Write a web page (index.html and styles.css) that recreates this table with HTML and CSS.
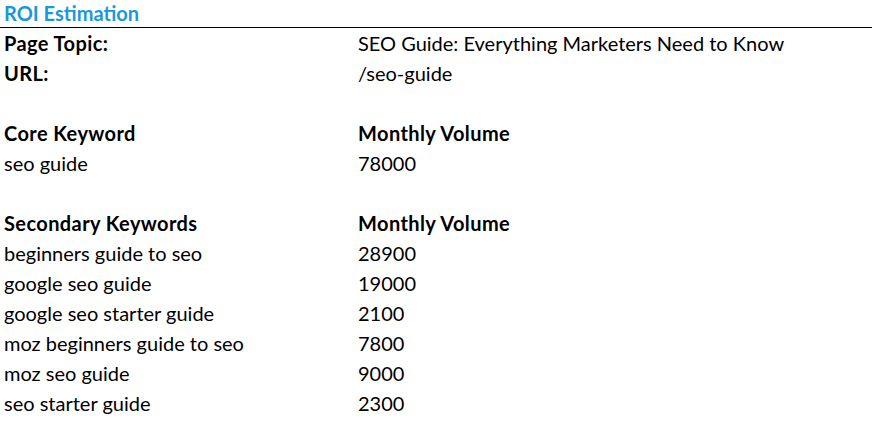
FILE: index.html
```html
<!DOCTYPE html>
<html>
<head>
<meta charset="utf-8">
<link rel="stylesheet" href="styles.css">
</head>
<body>
<div class="sheet">
  <div class="title">ROI Estimation</div>
  <div class="table">
    <div class="cell bold">Page Topic:</div><div class="cell">SEO Guide: Everything Marketers Need to Know</div>
    <div class="cell bold">URL:</div><div class="cell">/seo-guide</div>
    <div class="cell"></div><div class="cell"></div>
    <div class="cell bold">Core Keyword</div><div class="cell bold">Monthly Volume</div>
    <div class="cell">seo guide</div><div class="cell">78000</div>
    <div class="cell"></div><div class="cell"></div>
    <div class="cell bold">Secondary Keywords</div><div class="cell bold">Monthly Volume</div>
    <div class="cell">beginners guide to seo</div><div class="cell">28900</div>
    <div class="cell">google seo guide</div><div class="cell">19000</div>
    <div class="cell">google seo starter guide</div><div class="cell">2100</div>
    <div class="cell">moz beginners guide to seo</div><div class="cell">7800</div>
    <div class="cell">moz seo guide</div><div class="cell">9000</div>
    <div class="cell">seo starter guide</div><div class="cell">2300</div>
  </div>
</div>
</body>
</html>
```
FILE: styles.css
```css
html, body {
  margin: 0;
  padding: 0;
  background: #ffffff;
}
.sheet {
  font-family: Lato, "Liberation Sans", sans-serif;
  color: #000000;
}
.title {
  height: 27px;
  line-height: 27px;
  padding-left: 4px;
  font-size: 20px;
  font-weight: bold;
  color: #1b98d9;
  border-bottom: 1px solid #000000;
}
.table {
  display: grid;
  grid-template-columns: 354px 1fr;
  padding-left: 4px;
}
.cell {
  height: 30px;
  line-height: 30px;
  font-size: 20px;
  white-space: nowrap;
}
.bold {
  font-weight: bold;
  letter-spacing: 0.4px;
}
```
